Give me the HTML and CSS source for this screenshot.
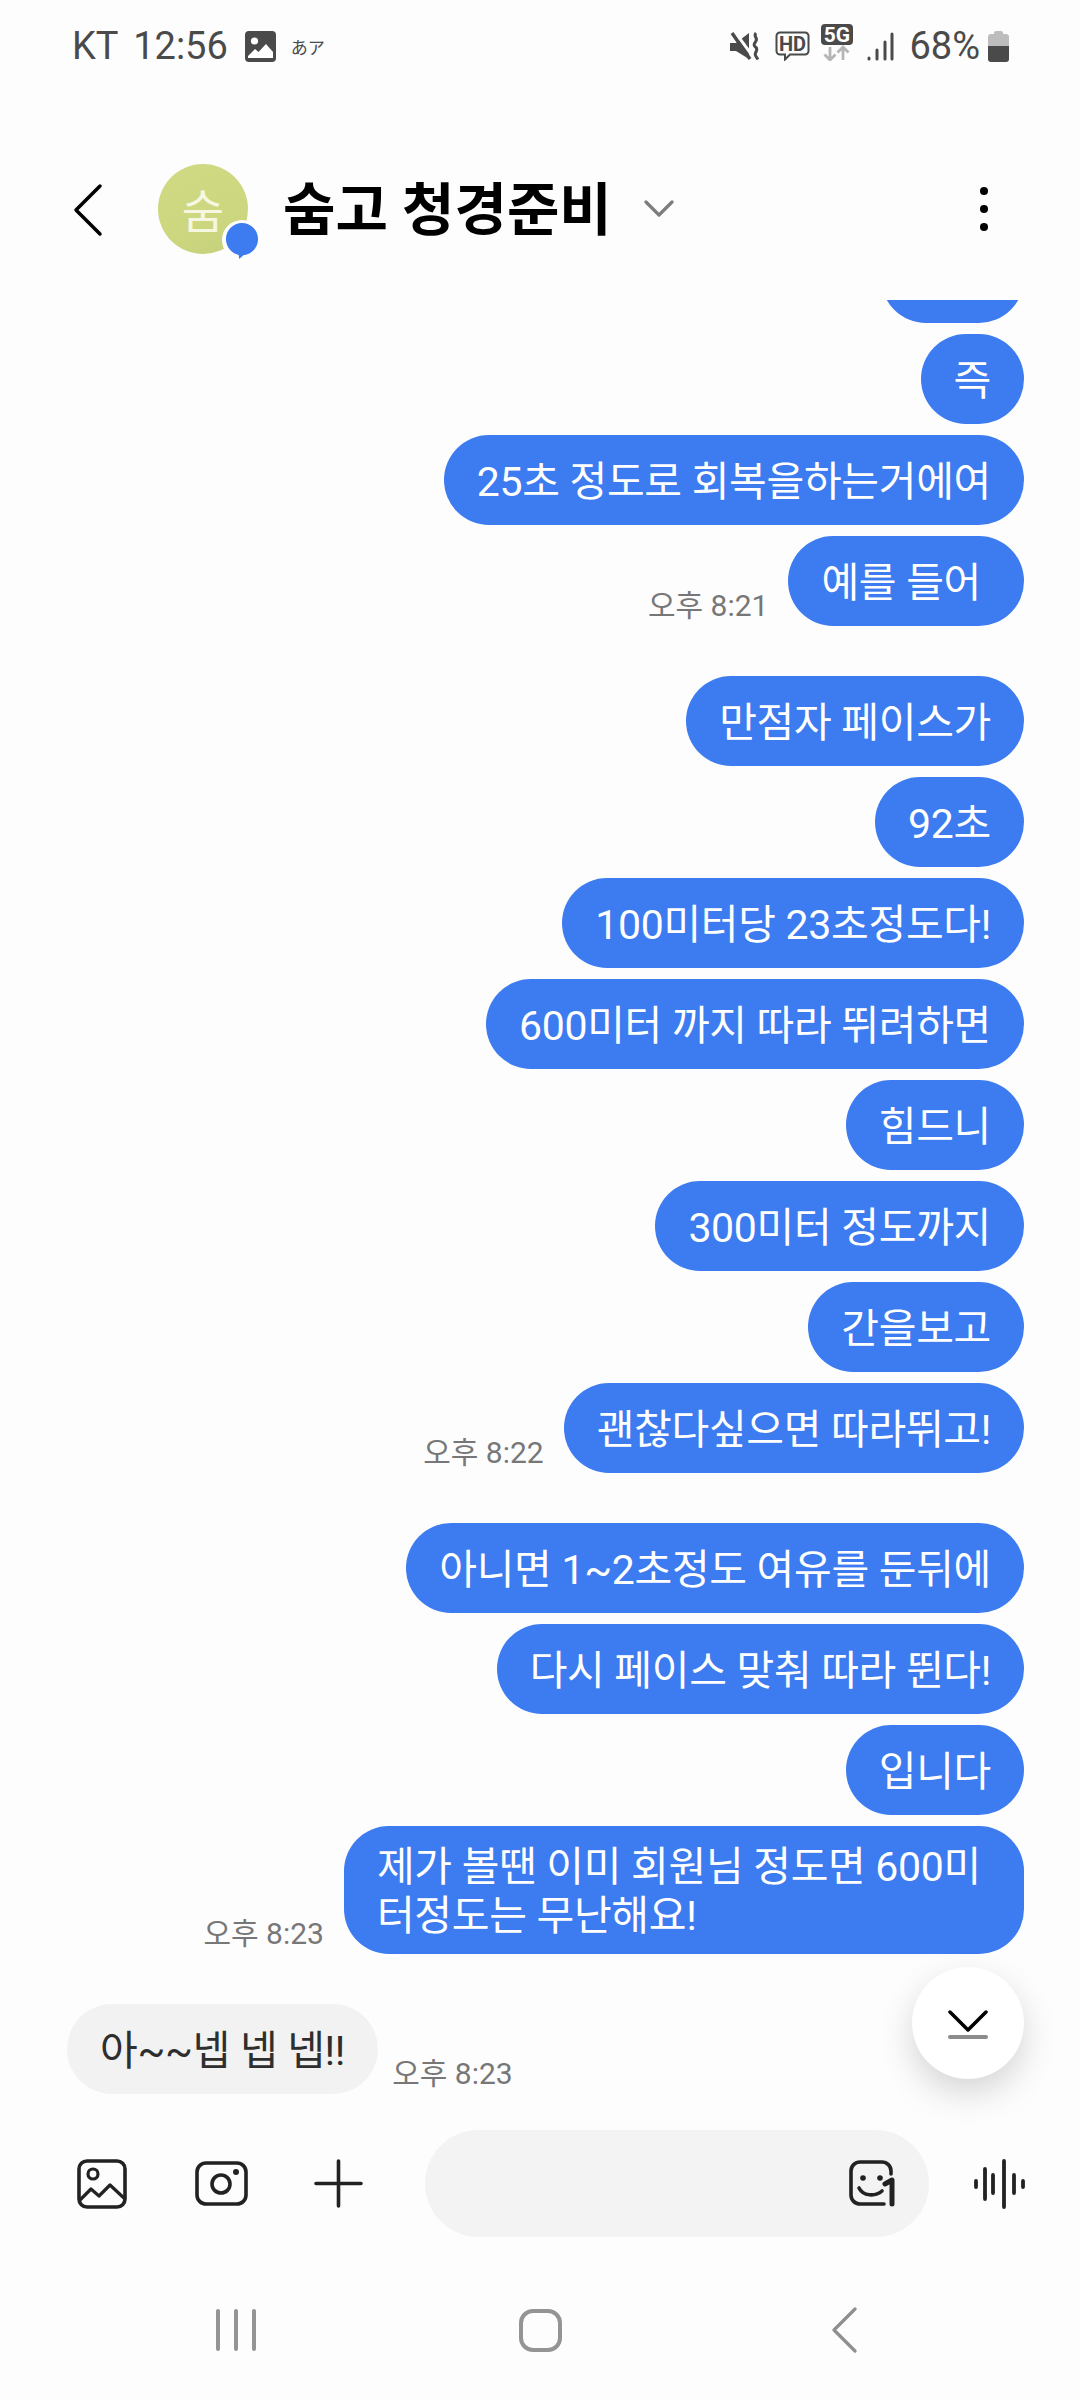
FILE: index.html
```html
<!DOCTYPE html>
<html lang="ko">
<head>
  <meta charset="UTF-8">
  <title>숨고 청경준비</title>
  <link rel="stylesheet" href="styles.css">
</head>
<body>
<div class="phone">

  <div class="status">
    <span class="status-text status-clock">KT 12:56</span>
    <svg class="ico-photo" viewBox="0 0 31 31"><rect width="31" height="31" rx="4" fill="#4a4a4a"/><circle cx="9.500" cy="10" r="3.600" fill="#fff"/><path d="M3 25l7-7 3.500 3L21 13l7 8v6H3z" fill="#fff"/></svg>
    <span class="ime">あア</span>
    <span class="status-right">
      <svg class="ico-mute" viewBox="0 0 30 29"><path d="M0 11h6L19 1v26L6 19H0z" fill="#4a4a4a"/><path d="M5 0l19 26" stroke="#fdfdfd" stroke-width="3"/><path d="M2 1l18 26" stroke="#4a4a4a" stroke-width="3.400"/><path d="M26 1c-3 3 2 5 0 8s-3 4 0 6.500-3 6 0 9l2 3" fill="none" stroke="#4a4a4a" stroke-width="3"/></svg>
      <svg class="ico-hd" viewBox="0 0 35 30"><path d="M5 1.500h25a3.500 3.500 0 0 1 3.500 3.500v15a3.500 3.500 0 0 1-3.500 3.500H15l-5 5v-5H5A3.500 3.500 0 0 1 1.500 20V5A3.500 3.500 0 0 1 5 1.500z" fill="none" stroke="#4a4a4a" stroke-width="2"/><text x="17.500" y="20" text-anchor="middle" class="hd-text">HD</text></svg>
      <svg class="ico-5g" viewBox="0 0 32 37"><rect width="32" height="21" rx="4" fill="#4a4a4a"/><text x="16" y="18" text-anchor="middle" class="fiveg-text">5G</text><path d="M9 23v13M3.500 30.500L9 36l5.500-5.500M22 36V23M16.500 28.500L22 23l5.500 5.500" fill="none" stroke="#b5b5b5" stroke-width="2.800"/></svg>
      <svg class="ico-signal" viewBox="0 0 27 29"><g stroke="#4a4a4a" stroke-width="3" stroke-linecap="round"><path d="M2 27v-1"/><path d="M10 27v-9"/><path d="M18 27V10"/><path d="M25 27V2"/></g></svg>
      <span class="status-text battery-text">68%</span>
      <svg class="ico-batt" viewBox="0 0 21 31"><path d="M6 2a2 2 0 0 1 2-2h5a2 2 0 0 1 2 2v1h3a3 3 0 0 1 3 3v9H0V6a3 3 0 0 1 3-3h3z" fill="#bdbdbd"/><path d="M0 15h21v13a3 3 0 0 1-3 3H3a3 3 0 0 1-3-3z" fill="#4a4a4a"/></svg>
    </span>
  </div>

  <div class="header">
    <svg class="ico-back" viewBox="0 0 30 54"><path d="M27 3L3 27l24 24" fill="none" stroke="#000" stroke-width="3.500" stroke-linecap="round" stroke-linejoin="round"/></svg>
    <div class="avatar">
      <span class="avatar-letter">숨</span>
      <span class="avatar-badge">
        <svg viewBox="0 0 36 38"><circle cx="18" cy="17" r="17" fill="#3d7bf0"/><path d="M14 30l1 8 7-6z" fill="#3d7bf0"/></svg>
      </span>
    </div>
    <h1 class="title">숨고 청경준비</h1>
    <svg class="ico-caret" viewBox="0 0 30 18"><path d="M2 2l13 13L28 2" fill="none" stroke="#7d7d7d" stroke-width="3.200" stroke-linecap="round" stroke-linejoin="round"/></svg>
    <div class="more"><i></i><i></i><i></i></div>
  </div>

  <div class="messages">
    <div class="row cut"><div class="bubble bubble-cut"></div></div>
    <div class="row"><div class="bubble">즉</div></div>
    <div class="row"><div class="bubble">25초 정도로 회복을하는거에여</div></div>
    <div class="row"><span class="time">오후 8:21</span><div class="bubble bubble-wide">예를 들어</div></div>

    <div class="row group"><div class="bubble">만점자 페이스가</div></div>
    <div class="row"><div class="bubble">92초</div></div>
    <div class="row"><div class="bubble">100미터당 23초정도다!</div></div>
    <div class="row"><div class="bubble">600미터 까지 따라 뛰려하면</div></div>
    <div class="row"><div class="bubble">힘드니</div></div>
    <div class="row"><div class="bubble">300미터 정도까지</div></div>
    <div class="row"><div class="bubble">간을보고</div></div>
    <div class="row"><span class="time">오후 8:22</span><div class="bubble">괜찮다싶으면 따라뛰고!</div></div>

    <div class="row group"><div class="bubble">아니면 1~2초정도 여유를 둔뒤에</div></div>
    <div class="row"><div class="bubble">다시 페이스 맞춰 따라 뛴다!</div></div>
    <div class="row"><div class="bubble">입니다</div></div>
    <div class="row"><span class="time">오후 8:23</span><div class="bubble bubble-wide">제가 볼땐 이미 회원님 정도면 600미<br>터정도는 무난해요!</div></div>

    <div class="row group in"><div class="bubble bubble-in">아~~넵 넵 넵!!</div><span class="time">오후 8:23</span></div>

    <button class="fab">
      <svg viewBox="0 0 40 30"><path d="M2 2l18 18L38 2" fill="none" stroke="#000" stroke-width="3.500" stroke-linecap="round" stroke-linejoin="round"/><path d="M2 27h36" stroke="#8c8c8c" stroke-width="4" stroke-linecap="round"/></svg>
    </button>
  </div>

  <div class="composer">
    <svg class="ico-gallery" viewBox="0 0 50 50"><rect x="2" y="2" width="46" height="46" rx="8" fill="none" stroke="#222" stroke-width="3.600"/><circle cx="16" cy="15" r="5" fill="none" stroke="#222" stroke-width="3.200"/><path d="M3 41l11-11 8 7 11-11 15 14" fill="none" stroke="#222" stroke-width="3.200" stroke-linejoin="round"/></svg>
    <svg class="ico-camera" viewBox="0 0 53 45"><rect x="2" y="2" width="49" height="41" rx="9" fill="none" stroke="#222" stroke-width="3.600"/><circle cx="26" cy="23" r="9" fill="none" stroke="#222" stroke-width="3.600"/><circle cx="41" cy="11" r="3" fill="#222"/></svg>
    <svg class="ico-plus" viewBox="0 0 49 49"><path d="M24.500 2v45M2 24.500h45" stroke="#222" stroke-width="3.600" stroke-linecap="round"/></svg>
    <div class="input">
      <svg class="ico-sticker" viewBox="0 0 49 47"><path d="M42 14V11a9 9 0 0 0-9-9H11a9 9 0 0 0-9 9v24a9 9 0 0 0 9 9h24" fill="none" stroke="#222" stroke-width="3.600" stroke-linecap="round"/><circle cx="14" cy="18" r="2.800" fill="#222"/><circle cx="31" cy="18" r="2.800" fill="#222"/><path d="M10 28c4 8 16 9 23 3" fill="none" stroke="#222" stroke-width="3.600" stroke-linecap="round"/><path d="M36 24l7-4v24" fill="none" stroke="#222" stroke-width="5" stroke-linecap="round" stroke-linejoin="round"/></svg>
    </div>
    <svg class="ico-voice" viewBox="0 0 53 50"><g stroke="#222" stroke-width="3.800" stroke-linecap="round"><path d="M3 22v6"/><path d="M12 10v30"/><path d="M20 16v18"/><path d="M31 2v46"/><path d="M41 16v18"/><path d="M50 22v6"/></g></svg>
  </div>

  <div class="navbar">
    <span class="nav-recent"><i></i><i></i><i></i></span>
    <span class="nav-home"></span>
    <svg class="ico-navback" viewBox="0 0 26 46"><path d="M24 2L3 23l21 21" fill="none" stroke="#8f8f8f" stroke-width="3.200" stroke-linecap="round" stroke-linejoin="round"/></svg>
  </div>

</div>
</body>
</html>
```

FILE: styles.css
```css
* {
  box-sizing: border-box;
}
body {
  margin: 0;
  background-color: #fdfdfd;
  font-family: "Roboto", "Noto Sans CJK KR", sans-serif;
}
.phone {
  width: 1080px;
  height: 2400px;
  display: flex;
  flex-direction: column;
  overflow: hidden;
}

/* status bar */
.status {
  height: 90px;
  flex: none;
  padding: 2px 71px 0 72px;
  display: flex;
  align-items: center;
  color: #4a4a4a;
}
.status-text {
  font-size: 38px;
  line-height: 44px;
}
.status-clock {
  word-spacing: 6px;
}
.ico-photo {
  width: 31px;
  height: 31px;
  margin-left: 17px;
}
.ime {
  font-size: 17px;
  margin-left: 15px;
  font-family: "Noto Sans CJK JP", sans-serif;
}
.status-right {
  margin-left: auto;
  display: flex;
  align-items: center;
}
.ico-mute { width: 30px; height: 29px; }
.ico-hd { width: 35px; height: 30px; margin-left: 15px; }
.ico-5g { width: 32px; height: 37px; margin-left: 11px; margin-top: -8px; }
.ico-signal { width: 27px; height: 29px; margin-left: 14px; }
.battery-text { margin-left: 15px; }
.ico-batt { width: 21px; height: 31px; margin-left: 8px; }
.hd-text {
  font-family: "Roboto", sans-serif;
  font-size: 20px;
  font-weight: 700;
  fill: #4a4a4a;
}
.fiveg-text {
  font-family: "Roboto", sans-serif;
  font-size: 21px;
  font-weight: 700;
  fill: #fff;
}

/* header */
.header {
  height: 210px;
  flex: none;
  padding: 28px 0 0 73px;
  display: flex;
  align-items: center;
}
.ico-back {
  width: 30px;
  height: 54px;
  margin-top: 2px;
}
.avatar {
  width: 90px;
  height: 90px;
  margin-left: 55px;
  border-radius: 50%;
  background: linear-gradient(160deg, #cfda83 0%, #ccd77f 60%, #c6d07c 100%);
  display: flex;
  align-items: center;
  justify-content: center;
  position: relative;
}
.avatar-letter {
  font-size: 46px;
  color: #f5f7e0;
  margin-top: -2px;
}
.avatar-badge {
  position: absolute;
  right: -14px;
  bottom: -6px;
  width: 40px;
  height: 40px;
  padding: 3px;
  border-radius: 50%;
  background: #fdfdfd;
}
.avatar-badge svg {
  display: block;
  width: 34px;
  height: 36px;
}
.title {
  margin: 3px 0 0 35px;
  font-size: 57px;
  line-height: 64px;
  font-weight: 700;
  color: #000;
}
.ico-caret {
  width: 30px;
  height: 18px;
  margin-left: 32px;
}
.more {
  margin-left: auto;
  margin-right: 92px;
  display: flex;
  flex-direction: column;
  gap: 10px;
}
.more i {
  display: block;
  width: 8px;
  height: 8px;
  border-radius: 50%;
  background: #000;
}

/* messages */
.messages {
  flex: 1;
  min-height: 0;
  padding: 0 56px 0 67px;
  display: flex;
  flex-direction: column;
  gap: 11px;
  overflow: hidden;
  position: relative;
}
.row {
  display: flex;
  justify-content: flex-end;
  align-items: flex-end;
  gap: 20px;
  flex: none;
}
.row.group {
  margin-top: 39px;
}
.row.cut {
  margin-top: -67px;
}
.row.in {
  justify-content: flex-start;
  gap: 14px;
}
.bubble {
  min-height: 90px;
  padding: 17px 33px 13px;
  border-radius: 45px;
  background: #3d7bf0;
  color: #fff;
  font-size: 41px;
  letter-spacing: -0.3px;
  line-height: 49px;
  display: flex;
  align-items: center;
  white-space: nowrap;
}
.bubble-wide {
  padding-right: 43px;
}
.bubble-cut {
  width: 143px;
}
.bubble-in {
  background: #f2f2f2;
  color: #2e2e2e;
}
.time {
  font-size: 30px;
  line-height: 36px;
  color: #777;
  padding-bottom: 2px;
  white-space: nowrap;
}
.fab {
  position: absolute;
  right: 56px;
  bottom: 51px;
  width: 112px;
  height: 112px;
  border: none;
  border-radius: 50%;
  background: #fff;
  box-shadow: 0 14px 34px rgba(0, 0, 0, 0.16);
  display: flex;
  align-items: center;
  justify-content: center;
  padding: 4px 0 0;
}
.fab svg {
  width: 40px;
  height: 30px;
}

/* composer */
.composer {
  height: 107px;
  flex: none;
  padding-left: 77px;
  display: flex;
  align-items: center;
}
.ico-gallery { width: 50px; height: 50px; }
.ico-camera { width: 53px; height: 45px; margin-left: 68px; }
.ico-plus { width: 49px; height: 49px; margin-left: 66px; }
.input {
  width: 504px;
  height: 107px;
  margin-left: 62px;
  padding-right: 31px;
  border-radius: 54px;
  background: #f3f3f3;
  display: flex;
  align-items: center;
  justify-content: flex-end;
}
.ico-sticker { width: 49px; height: 47px; }
.ico-voice { width: 53px; height: 50px; margin-left: 44px; }

/* navigation bar */
.navbar {
  height: 163px;
  flex: none;
  padding-top: 72px;
  display: grid;
  grid-template-columns: repeat(3, 304px);
  justify-content: center;
  justify-items: center;
  align-items: start;
}
.nav-recent {
  display: flex;
  gap: 14px;
}
.nav-recent i {
  display: block;
  width: 4px;
  height: 42px;
  border-radius: 2px;
  background: #949494;
}
.nav-home {
  width: 43px;
  height: 43px;
  border: 4px solid #949494;
  border-radius: 14px;
}
.ico-navback {
  width: 26px;
  height: 46px;
  margin-top: -2px;
}
```
